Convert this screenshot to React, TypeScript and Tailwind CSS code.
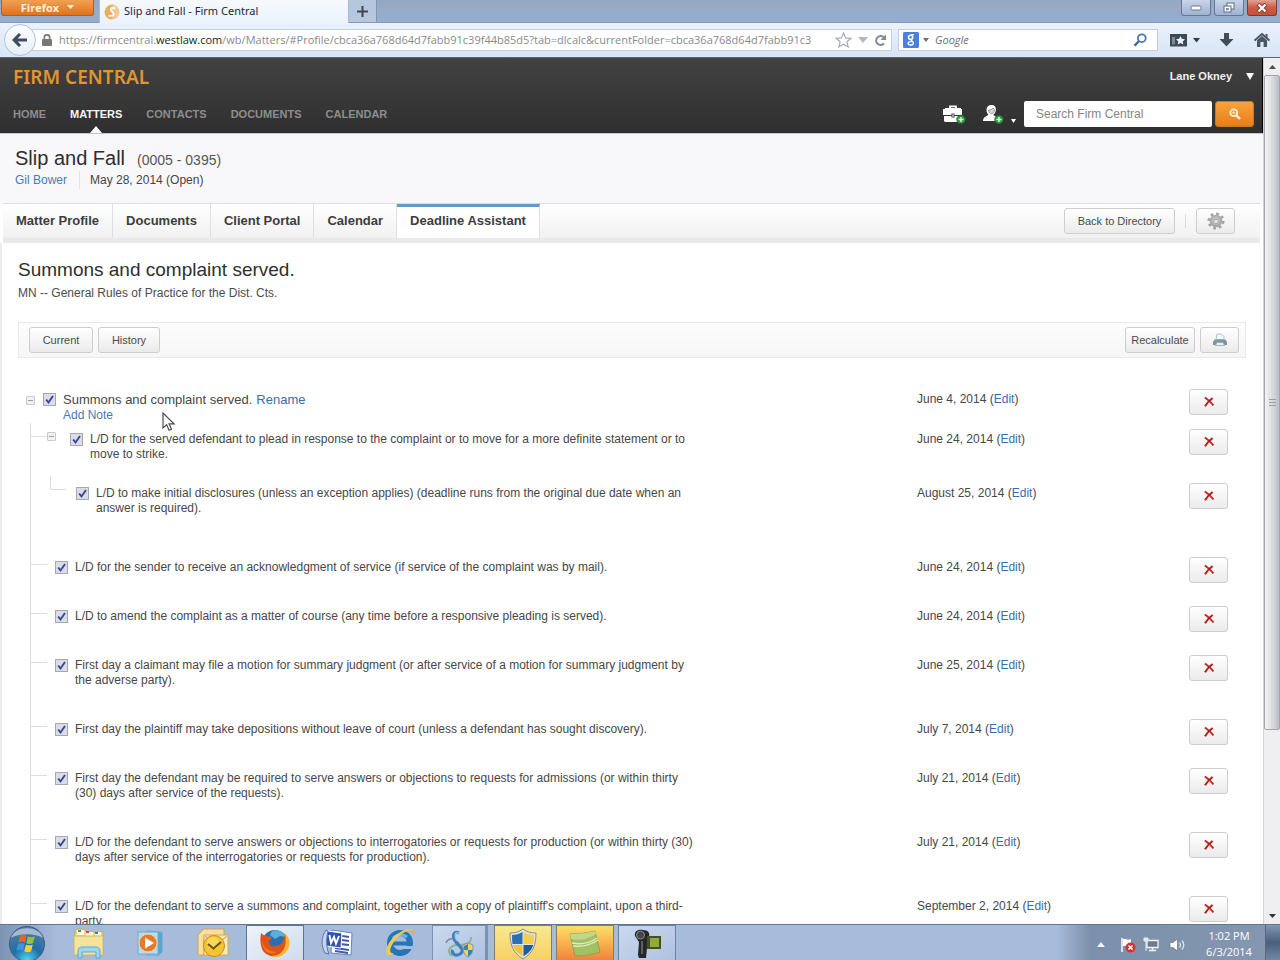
import { useId, useState } from "react";
import type { ReactNode } from "react";

type Deadline = {
  text: string;
  date: string;
  children?: Deadline[];
};

const deadlines: Deadline[] = [
  {
    text: "L/D for the served defendant to plead in response to the complaint or to move for a more definite statement or to move to strike.",
    date: "June 24, 2014",
    children: [
      {
        text: "L/D to make initial disclosures (unless an exception applies) (deadline runs from the original due date when an answer is required).",
        date: "August 25, 2014",
      },
    ],
  },
  { text: "L/D for the sender to receive an acknowledgment of service (if service of the complaint was by mail).", date: "June 24, 2014" },
  { text: "L/D to amend the complaint as a matter of course (any time before a responsive pleading is served).", date: "June 24, 2014" },
  { text: "First day a claimant may file a motion for summary judgment (or after service of a motion for summary judgment by the adverse party).", date: "June 25, 2014" },
  { text: "First day the plaintiff may take depositions without leave of court (unless a defendant has sought discovery).", date: "July 7, 2014" },
  { text: "First day the defendant may be required to serve answers or objections to requests for admissions (or within thirty (30) days after service of the requests).", date: "July 21, 2014" },
  { text: "L/D for the defendant to serve answers or objections to interrogatories or requests for production (or within thirty (30) days after service of the interrogatories or requests for production).", date: "July 21, 2014" },
  { text: "L/D for the defendant to serve a summons and complaint, together with a copy of plaintiff's complaint, upon a third-party.", date: "September 2, 2014" },
];

const buttonLook =
  "flex items-center justify-center rounded-[3px] border border-[#cdcdcd] bg-linear-to-b from-white to-[#ebebeb] text-[11px] text-[#4a4a4a]";

/* ---------- Browser frame ---------- */

function TitleBar() {
  return (
    <div className="flex h-[23px] shrink-0 items-start border-b border-[#8497b3] bg-linear-to-b from-[#93a7c3] via-[#98abc8] to-[#93add2]">
      <button className="ml-px flex h-4 w-[93px] shrink-0 items-center justify-center gap-2 rounded-b-[3px] border border-t-0 border-[#a8622a] bg-linear-to-b from-[#f0a050] to-[#e07218] font-['Open_Sans',sans-serif] text-[11px] leading-[15px] font-bold text-[#fdf0dc]">
        Firefox
        <svg width="7" height="5" aria-hidden="true"><path d="M0 0h7L3.500 4z" fill="#fdf0dc" /></svg>
      </button>
      <div className="ml-[5px] flex h-[23px] w-[250px] shrink-0 items-center gap-1 border-x border-[#a9bad2] bg-linear-to-b from-[#f6f9fd] to-[#eaf3fd] pl-1 font-['Noto_Sans',sans-serif] text-[11px] text-[#222831]">
        <svg width="16" height="16" viewBox="0 0 16 16" aria-hidden="true">
          <circle cx="8" cy="8" r="7.500" fill="#f3c793" />
          <path d="M1 10a7.500 7.500 0 0 1 9-9C7 2 5 4 7 6.500S11 11 7 15.500A7.500 7.500 0 0 1 1 10z" fill="#eda04c" opacity=".75" />
          <path d="M11.500 4.500C8 3 5 5 8 7.600s2 5-3.500 4" fill="none" stroke="#fff" strokeWidth="1.800" />
        </svg>
        Slip and Fall - Firm Central
      </div>
      <button aria-label="New tab" className="flex h-[22px] w-7 shrink-0 items-center justify-center border-r border-[#8194b2] bg-[#b6c6dd]">
        <svg width="11" height="11" aria-hidden="true"><path d="M5.500 0v11M0 5.500h11" stroke="#3c4654" strokeWidth="2" /></svg>
      </button>
      <div className="ml-auto flex gap-[3px] pr-[3px]">
        <button aria-label="Minimize" className="flex h-4 w-[30px] items-center justify-center rounded-b-[3px] border border-t-0 border-[#647894] bg-linear-to-b from-[#c8d5e8] to-[#9db3d3]">
          <svg width="12" height="6" aria-hidden="true"><rect x="1" y="1" width="10" height="4" rx="1" fill="#fff" stroke="#68778d" /></svg>
        </button>
        <button aria-label="Restore" className="flex h-4 w-[30px] items-center justify-center rounded-b-[3px] border border-t-0 border-[#647894] bg-linear-to-b from-[#c8d5e8] to-[#9db3d3]">
          <svg width="14" height="12" aria-hidden="true">
            <rect x="5" y="1" width="7" height="6" fill="#fff" stroke="#5a6a82" />
            <rect x="2" y="4" width="7" height="6" fill="#fff" stroke="#5a6a82" />
            <rect x="4.500" y="6.500" width="2" height="1.500" fill="#9db3d3" stroke="#5a6a82" strokeWidth=".6" />
          </svg>
        </button>
        <button aria-label="Close" className="flex h-4 w-[30px] items-center justify-center rounded-b-[3px] border border-t-0 border-[#7c3a34] bg-linear-to-b from-[#e0a193] via-[#cf5b45] to-[#c4503a]">
          <svg width="12" height="10" aria-hidden="true">
            <path d="M2 1l8 8M10 1L2 9" stroke="#7b3a35" strokeWidth="4" />
            <path d="M2.500 1.500l7 7M9.500 1.500l-7 7" stroke="#fff" strokeWidth="2.300" />
          </svg>
        </button>
      </div>
    </div>
  );
}

function Toolbar() {
  return (
    <div className="flex h-[35px] shrink-0 items-center border-b border-[#5d6670] bg-linear-to-b from-[#eaf3fd] to-[#d8e4f5]">
      <button aria-label="Back" className="relative z-10 ml-1 flex size-8 shrink-0 items-center justify-center rounded-full border border-[#b3c2d6] bg-linear-to-b from-[#fbfdff] to-[#e8eff8]">
        <svg width="16" height="14" viewBox="0 0 16 14" aria-hidden="true"><path d="M8 1L2 7l6 6M2.500 7H15" fill="none" stroke="#3f4c5e" strokeWidth="3" /></svg>
      </button>
      <div className="-ml-1 flex h-[22px] min-w-0 flex-1 items-center border border-[#c3d0e0] bg-white pr-1 pl-[9px] font-['Open_Sans',sans-serif] text-[11px]">
        <svg width="10" height="12" viewBox="0 0 10 12" className="shrink-0" aria-hidden="true">
          <path d="M2.300 6V3.500a2.700 2.700 0 0 1 5.400 0V6" fill="none" stroke="#7e7e7e" strokeWidth="1.700" />
          <rect y="5" width="10" height="7" rx="1" fill="#777" />
        </svg>
        <div role="textbox" aria-label="Address" className="ml-[7px] min-w-0 flex-1 overflow-hidden whitespace-nowrap text-[#8a8a8a]">
          https://firmcentral.<span className="text-[#1c1c1c]">westlaw.com</span>/wb/Matters/#Profile/cbca36a768d64d7fabb91c39f44b85d5?tab=dlcalc&amp;currentFolder=cbca36a768d64d7fabb91c3
        </div>
        <button aria-label="Bookmark" className="ml-[5px]">
          <svg width="17" height="16" viewBox="0 0 17 16" aria-hidden="true"><path d="M8.500 1l2.100 4.900 5.400.4-4.100 3.500 1.300 5.200-4.700-2.800L3.800 15l1.300-5.200L1 6.300l5.400-.4z" fill="#fff" stroke="#a5abb3" strokeWidth="1.200" /></svg>
        </button>
        <button aria-label="Address history" className="ml-1.5">
          <svg width="10" height="8" aria-hidden="true"><path d="M0 1h10L5 7z" fill="#b1b8c4" /></svg>
        </button>
        <button aria-label="Reload" className="ml-1.5">
          <svg width="13" height="13" viewBox="0 0 13 13" aria-hidden="true">
            <path d="M10 9.500A4.500 4.500 0 1 1 9.800 3.300" fill="none" stroke="#7d8797" strokeWidth="1.900" />
            <path d="M12 .5v5.600H6.500z" fill="#7d8797" />
          </svg>
        </button>
      </div>
      <div className="ml-1.5 flex h-[22px] w-[260px] shrink-0 items-center border border-[#c3d0e0] bg-white pr-1 pl-1">
        <button aria-label="Search engine" className="flex items-center gap-1">
          <svg width="16" height="16" viewBox="0 0 16 16" aria-hidden="true">
            <rect width="16" height="16" rx="1.500" fill="#4a7fe0" />
            <circle cx="7.600" cy="5.300" r="2.100" fill="none" stroke="#fff" strokeWidth="1.600" />
            <path d="M11 2.600H8M8.600 7.600c-1.400 1.100 1.800 1.600 1.800 3.600 0 2.400-5.300 2.300-5.300.2 0-1.500 2-1.900 3.500-1.800" fill="none" stroke="#fff" strokeWidth="1.400" />
          </svg>
          <svg width="6" height="4" aria-hidden="true"><path d="M0 0h6L3 4z" fill="#6c6c6c" /></svg>
        </button>
        <input aria-label="Google search" placeholder="Google" className="ml-1.5 min-w-0 flex-1 bg-transparent font-['Open_Sans',sans-serif] text-[11px] italic outline-none placeholder:text-[#6f6f6f]" />
        <button aria-label="Go" className="mr-1.5">
          <svg width="14" height="14" viewBox="0 0 14 14" aria-hidden="true">
            <circle cx="8.800" cy="5.200" r="3.900" fill="#fff" stroke="#4a77ab" strokeWidth="1.800" />
            <path d="M6 8l-4.500 4.800" stroke="#3c689c" strokeWidth="2.400" />
          </svg>
        </button>
      </div>
      <div className="flex shrink-0 items-center pr-2.5 pl-3">
        <button aria-label="Bookmarks" className="flex items-center gap-1.5">
          <svg width="17" height="14" viewBox="0 0 17 14" aria-hidden="true">
            <path d="M0 1h17v12.500H0z" fill="#3d4855" />
            <path d="M2 4h3v7.500H2z" fill="#7f8a96" />
            <path d="M10.500 3l1.300 2.800 3.200.4-2.300 2.200.6 3.200-2.800-1.600-2.800 1.600.6-3.200L6 6.200l3.200-.4z" fill="#eef3f9" />
          </svg>
          <svg width="7" height="5" aria-hidden="true"><path d="M0 0h7L3.500 4.500z" fill="#333d4a" /></svg>
        </button>
        <button aria-label="Downloads" className="ml-[19px]">
          <svg width="15" height="14" viewBox="0 0 15 14" aria-hidden="true"><path d="M5 0h5v6h4.500l-7 7.500-7-7.500H5z" fill="#434d5a" /></svg>
        </button>
        <button aria-label="Home page" className="ml-5">
          <svg width="16" height="14" viewBox="0 0 16 14" aria-hidden="true">
            <path d="M.6 7.600L8 1l7.400 6.600" fill="none" stroke="#4b5664" strokeWidth="2" />
            <path d="M11.500 1h2v4l-2-1.800zM3 7.300l5-4.400 5 4.400V14H9.600V9H6.400v5H3z" fill="#4b5664" />
          </svg>
        </button>
      </div>
    </div>
  );
}

function Scrollbar() {
  return (
    <div aria-hidden="true" className="flex w-[17px] shrink-0 flex-col border-l border-[#d4d4d8] bg-[#efeff1]">
      <div className="flex h-[17px] items-center justify-center">
        <svg width="7" height="4"><path d="M3.500 0L7 4H0z" fill="#4d4d4d" /></svg>
      </div>
      <div className="flex grow-[655] basis-0 items-center justify-center rounded-[2px] border border-[#a4a4ac] bg-linear-to-r from-[#f3f3f4] via-[#dcdce0] to-[#bdbdc6]">
        <svg width="7" height="8"><path d="M0 .5h7M0 3.500h7M0 6.500h7" stroke="#9b9ba1" /></svg>
      </div>
      <div className="grow-[177] basis-0" />
      <div className="flex h-[17px] items-center justify-center">
        <svg width="7" height="4"><path d="M0 0h7L3.500 4z" fill="#333" /></svg>
      </div>
    </div>
  );
}

/* ---------- Firm Central header ---------- */

function PlusBadge() {
  return (
    <g>
      <circle cx="18" cy="15.500" r="4.300" fill="#2f9a45" stroke="#1d5c2a" strokeWidth=".7" />
      <path d="M18 13v5M15.500 15.500h5" stroke="#d8f5d8" strokeWidth="1.500" />
    </g>
  );
}

function SiteHeader() {
  const nav = ["HOME", "MATTERS", "CONTACTS", "DOCUMENTS", "CALENDAR"];
  return (
    <header className="flex h-[75px] shrink-0 justify-between border-r border-black bg-linear-to-b from-[#424242] to-[#2f2f2f] pr-2 pl-[13px]">
      <div className="flex flex-col justify-between">
        <a href="#home" className="pt-1.5 font-['Noto_Sans',sans-serif] text-[19px] leading-[27px] font-semibold text-[#e0952f]">FIRM CENTRAL</a>
        <nav className="flex gap-6">
          {nav.map((item) => (
            <a
              key={item}
              href={"#" + item.toLowerCase()}
              className={
                item === "MATTERS"
                  ? "relative h-[27px] text-[11px] leading-4 font-bold text-[#f4f4f4]"
                  : "h-[27px] text-[11px] leading-4 font-bold text-[#8d8d8d]"
              }
            >
              {item}
              {item === "MATTERS" && (
                <svg width="12" height="7" className="absolute bottom-0 left-1/2 -translate-x-1/2" aria-hidden="true"><path d="M6 0l6 7H0z" fill="#fafafc" /></svg>
              )}
            </a>
          ))}
        </nav>
      </div>
      <div className="flex flex-col items-end justify-between pt-2.5 pb-[6px]">
        <button className="flex items-center gap-3.5 text-[11px] leading-4 font-bold text-[#f0f0f0]">
          Lane Okney
          <svg width="8" height="7" aria-hidden="true"><path d="M0 0h8L4 7z" fill="#fff" /></svg>
        </button>
        <div className="flex items-center">
          <button aria-label="Add matter">
            <svg width="24" height="21" viewBox="0 0 24 21" aria-hidden="true">
              <path d="M7 4.500V2.300h6v2.200" fill="none" stroke="#fff" strokeWidth="1.800" />
              <path d="M2 4h16v1h1v6h-7.500V9.500h-3V11H0V5h2zM1 12h7.500v1.500h3V12H18v6H2l-1-1z" fill="#fff" />
              <path d="M10 10v3" stroke="#bbb" strokeWidth="1.500" />
              <PlusBadge />
            </svg>
          </button>
          <button aria-label="Add contact" className="ml-3.5 flex items-end gap-1.5">
            <svg width="24" height="21" viewBox="0 0 24 21" aria-hidden="true">
              <path d="M10.500 1c3 0 4.600 2 4.400 4.800-.2 2.400-1.200 4.200-2.600 5 .3 1 5 2 5.200 6.200H2c0-4.500 4.800-5 5.400-6.500C6 9.300 5.500 7.800 5.500 5.600 5.500 2.800 7.500 1 10.500 1z" fill="#fff" />
              <path d="M7.500 6c2 0 4-.8 4.800-2 .3 1 .8 1.500 1.300 1.700-.2 2.500-1.400 4-3.100 4S7.600 8.300 7.500 6z" fill="#d5d5d5" stroke="#555" strokeWidth=".5" />
              <PlusBadge />
            </svg>
            <svg width="5" height="7" aria-hidden="true"><path d="M0 1h5L2.500 5z" fill="#fff" /></svg>
          </button>
          <input aria-label="Search Firm Central" placeholder="Search Firm Central" className="ml-2 h-[26px] w-[188px] rounded-[2px] bg-white px-3 text-[12px] text-[#333] outline-none placeholder:text-[#858585]" />
          <button aria-label="Search" className="ml-[3px] flex h-[26px] w-[39px] items-center justify-center rounded-[3px] border border-[#c97a1b] bg-linear-to-b from-[#f9a23a] to-[#e57f18]">
            <svg width="12" height="12" viewBox="0 0 12 12" aria-hidden="true">
              <circle cx="4.800" cy="4.800" r="3.400" fill="none" stroke="#fff3e0" strokeWidth="1.800" />
              <path d="M4.800 3.300v3M3.300 4.800h3" stroke="#fff3e0" />
              <path d="M7.500 7.500L11 11" stroke="#fff3e0" strokeWidth="2.400" />
            </svg>
          </button>
        </div>
      </div>
    </header>
  );
}

function MatterHeader() {
  return (
    <div className="h-[70px] border-t border-[#c8c8cc] bg-[#f8f8fa] pt-3 pl-[15px]">
      <div className="flex items-baseline gap-3">
        <h1 className="text-[20px] leading-6 text-[#2e2e2e]">Slip and Fall</h1>
        <span className="text-[14px] text-[#555]">(0005 - 0395)</span>
      </div>
      <div className="flex text-[12px] leading-[18px] text-[#454545]">
        <a href="#client" className="border-r border-[#e2e4e8] pr-3 text-[#4a7ab5]">Gil Bower</a>
        <span className="pl-2.5">May 28, 2014 (Open)</span>
      </div>
    </div>
  );
}

function TabBar() {
  const tabs = ["Matter Profile", "Documents", "Client Portal", "Calendar"];
  return (
    <div className="mr-[3px] ml-[3px] flex h-10 items-stretch justify-between border-t border-b-5 border-t-[#dcdcde] border-b-[#e9e9ea] bg-linear-to-b from-white to-[#f1f1f1]">
      <nav className="flex text-[13px] leading-[34px] font-bold text-[#3d3d3d]">
        {tabs.map((tab) => (
          <a key={tab} href={"#" + tab} className="border-r border-[#dfdfdf] px-[13px]">{tab}</a>
        ))}
        <a href="#deadlines" aria-current="page" className="border-t-3 border-r border-t-[#6a98c4] border-r-[#dfdfdf] bg-white px-[13px] leading-7">Deadline Assistant</a>
      </nav>
      <div className="flex items-center pr-[25px]">
        <button className={"h-[26px] w-[111px] " + buttonLook}>Back to Directory</button>
        <span className="mx-2.5 h-3.5 w-px bg-[#dcdcdc]" />
        <button aria-label="Settings" className={"h-[26px] w-[39px] " + buttonLook}>
          <svg width="20" height="18" viewBox="0 0 20 20" aria-hidden="true">
            <circle cx="10" cy="10" r="8" fill="none" stroke="#a2a2a2" strokeWidth="3" strokeDasharray="3 3.280" />
            <circle cx="10" cy="10" r="7" fill="#a9a9a9" />
            <circle cx="10" cy="9.500" r="4.800" fill="#bdbdbd" />
            <circle cx="10" cy="10.500" r="2.600" fill="#e4e4e4" stroke="#a0a0a0" />
          </svg>
        </button>
      </div>
    </div>
  );
}

/* ---------- Deadline tree ---------- */

function CheckItem({ text, className, children }: { text?: string; className?: string; children?: ReactNode }) {
  const id = useId();
  const [checked, setChecked] = useState(true);
  return (
    <div className={"flex min-w-0 flex-1 items-start gap-[7px] pr-[217px] " + (className ?? "")}>
      <span className="relative mt-px size-[13px] shrink-0">
        <input
          id={id}
          type="checkbox"
          checked={checked}
          onChange={() => setChecked(!checked)}
          className="peer block size-[13px] appearance-none border border-[#a4a6b0] bg-[#dcdce6]"
        />
        <svg width="13" height="13" className="pointer-events-none invisible absolute inset-0 peer-checked:visible" aria-hidden="true">
          <path d="M3.200 6.500l2.300 3L10 3" fill="none" stroke="#36449a" strokeWidth="1.900" />
        </svg>
      </span>
      {text ? (
        <label htmlFor={id}>{text}</label>
      ) : (
        <div>
          <label htmlFor={id} className="text-[13px]">Summons and complaint served.</label>
          {children}
        </div>
      )}
    </div>
  );
}

function DateAndDelete({ date }: { date: string }) {
  return (
    <div className="flex w-[311px] shrink-0 items-start justify-between">
      <span>
        {date} (<a href="#edit" className="text-[#3b6da8]">Edit</a>)
      </span>
      <button aria-label="Delete deadline" className={"-mt-[3px] -mb-4 h-[26px] w-[39px] " + buttonLook}>
        <svg width="10" height="10" viewBox="0 0 10 10" aria-hidden="true">
          <path d="M.8.500C4 2.500 7.500 6 9.500 8.500" fill="none" stroke="#c22a22" strokeWidth="1.900" />
          <path d="M8.600 1C6 3 3 6 1 9.300" fill="none" stroke="#b81d17" strokeWidth="2.100" />
        </svg>
      </button>
    </div>
  );
}

function Collapse() {
  return (
    <button aria-label="Collapse" className="flex size-[9px] shrink-0 items-center justify-center rounded-[1px] border border-[#cacaca] bg-[#f1f1f1]">
      <span className="h-px w-[5px] bg-[#9d9d9d]" />
    </button>
  );
}

function DeadlineNode({ item }: { item: Deadline }) {
  return (
    <li className="mb-[34px]">
      <div className="flex items-start">
        <span className="mt-1 h-px w-4 shrink-0 bg-[#dedede]" />
        {item.children && (
          <span className="mr-[6px] flex"><Collapse /></span>
        )}
        <CheckItem text={item.text} className="pl-2" />
        <DateAndDelete date={item.date} />
      </div>
      {item.children && (
        <ul className="mt-6 -mb-6 pb-[34px] pl-[19px]">
          {item.children.map((child) => (
            <li key={child.text} className="flex items-start">
              <span className="-mt-2.5 h-[14px] w-4 shrink-0 border-b border-l border-[#dedede]" />
              <CheckItem text={child.text} className="pl-2.5" />
              <DateAndDelete date={child.date} />
            </li>
          ))}
        </ul>
      )}
    </li>
  );
}

function DeadlineTree() {
  return (
    <div className="relative mt-[34px] pr-[35px] text-[12px] leading-[15px] text-[#474747]">
      <div className="flex items-start pl-2">
        <span className="mt-1 mr-2 flex"><Collapse /></span>
        <CheckItem>
          <a href="#rename" className="ml-1 text-[13px] text-[#3b6da8]">Rename</a>
          <a href="#note" className="block text-[#4a7ab5]">Add Note</a>
        </CheckItem>
        <DateAndDelete date="June 4, 2014" />
      </div>
      <ul className="ml-3 border-l border-[#dedede] pt-[9px]">
        {deadlines.map((item) => (
          <DeadlineNode key={item.text} item={item} />
        ))}
      </ul>
      <svg width="14" height="20" viewBox="0 0 14 20" className="absolute top-5 left-36" aria-hidden="true">
        <path d="M1 1v15l3.600-3.300 2.500 5.600 2.400-1-2.400-5.500h5z" fill="#fff" stroke="#4c4c4c" strokeWidth="1.200" />
      </svg>
    </div>
  );
}

function DeadlinePanel() {
  return (
    <main className="border-l-2 border-[#ececec] bg-white pt-[17px] pl-4">
      <h2 className="text-[19px] leading-5 text-[#2f2f2f]">Summons and complaint served.</h2>
      <p className="mt-1 text-[12px] leading-[18px] text-[#4c4c4c]">MN -- General Rules of Practice for the Dist. Cts.</p>
      <div className="mt-5 mr-[17px] flex h-9 items-center justify-between border border-[#e9e9e9] bg-linear-to-b from-[#fdfdfd] to-[#f6f6f6] pr-1.5 pl-2.5">
        <div className="flex gap-[5px]">
          <button className={"h-[26px] w-16 " + buttonLook}>Current</button>
          <button className={"h-[26px] w-[62px] " + buttonLook}>History</button>
        </div>
        <div className="flex gap-[5px]">
          <button className={"h-[26px] w-[70px] " + buttonLook}>Recalculate</button>
          <button aria-label="Print" className={"h-[26px] w-[39px] " + buttonLook}>
            <svg width="16" height="14" viewBox="0 0 16 14" aria-hidden="true">
              <path d="M4 6.500L5 1h4.500L12 3.500v3z" fill="#eef8fb" stroke="#9fc0cc" strokeWidth=".9" />
              <path d="M2.500 6.500h11L15 9v3h-3l-1-2H5l-1 2H1V9z" fill="#84939b" />
              <path d="M5 9.500h6l1.500 3h-9z" fill="#dff1f7" stroke="#8fa7b2" strokeWidth=".8" />
            </svg>
          </button>
        </div>
      </div>
      <DeadlineTree />
    </main>
  );
}

/* ---------- Windows taskbar ---------- */

const slotLooks = {
  plain: "flex h-9 w-[62px] items-center justify-center",
  active: "mx-0.5 flex h-9 w-[58px] items-center justify-center border border-b-0 border-[#5f7391] bg-linear-to-br from-[#eef3fa] to-[#cfdbed]",
  open: "mx-0.5 flex h-9 w-[58px] items-center justify-center border border-b-0 border-[#6c80a0] bg-linear-to-br from-[#cbd9ee] to-[#adc1e0]",
  stacked: "mr-1 ml-0.5 flex h-9 w-[56px] items-center justify-center border border-r-3 border-b-0 border-[#7d91b0] bg-linear-to-br from-[#cbd9ee] to-[#adc1e0]",
  yellow: "mx-0.5 flex h-9 w-[58px] items-center justify-center border border-b-0 border-[#8a7d55] bg-linear-to-b from-[#f7e98d] to-[#f8cf62]",
  orange: "mx-0.5 flex h-9 w-[58px] items-center justify-center border border-b-0 border-[#8a7d55] bg-linear-to-b from-[#fae065] to-[#f0803a]",
};

function Slot({ label, look, children }: { label: string; look: keyof typeof slotLooks; children: ReactNode }) {
  return (
    <button aria-label={label} className={slotLooks[look]}>
      <svg width="34" height="32" viewBox="0 0 34 32" aria-hidden="true">{children}</svg>
    </button>
  );
}

function Taskbar() {
  return (
    <footer className="flex h-9 shrink-0 justify-between border-t border-[#64768f] bg-[#a7bbdb]">
      <div className="flex items-start">
        <button aria-label="Start" className="flex h-9 w-[58px] justify-center bg-linear-to-r from-[#7d93b3] to-[#a7bbdb] pr-1">
          <svg width="38" height="36" viewBox="0 0 38 36" aria-hidden="true">
            <defs>
              <radialGradient id="orb" cx=".5" cy=".95" r=".9">
                <stop offset="0" stopColor="#4fd6f2" />
                <stop offset=".45" stopColor="#1d6fa8" />
                <stop offset="1" stopColor="#5b7ca0" />
              </radialGradient>
            </defs>
            <circle cx="19" cy="19" r="17.500" fill="url(#orb)" stroke="#3d5a80" />
            <path d="M3 13C7 0 31 0 35 13 27 8 11 8 3 13z" fill="#c6d6e6" opacity=".7" />
            <path d="M12 11c2-1.500 4-1.500 6.500-.2L17 17.500c-2.500-1.200-4.500-1-6.800.2z" fill="#e8632a" />
            <path d="M19.800 11.300c2.500 1.300 4.700 1.300 7-.1l-1.700 6.900c-2.300 1.300-4.500 1.200-6.800.1z" fill="#8fc43f" />
            <path d="M9.900 19c2.200-1.300 4.400-1.400 6.800-.2l-1.600 6.800c-2.400-1.200-4.500-1.200-6.800.1z" fill="#3f94dd" />
            <path d="M18 19.500c2.300 1.100 4.500 1.200 6.800 0l-1.700 6.700c-2.300 1.400-4.500 1.300-6.800.1z" fill="#f8cf3b" />
          </svg>
        </button>
        <Slot label="Explorer" look="plain">
          <path d="M3 4l2-2h8l1 3h17v23H2z" fill="#efd884" stroke="#c9a955" />
          <path d="M5 3h7v5H5zM14 5h7v4h-7zM23 5h6v4h-6z" fill="#fff8dc" />
          <path d="M6 3h3v2H6z" fill="#43a35a" /><path d="M14 4h3v2h-3z" fill="#d1503c" /><path d="M23 5h3v2h-3z" fill="#3d7fc0" />
          <path d="M2 9h29v19H2z" fill="#f5e39c" stroke="#d3b75e" />
          <path d="M6 31v-7c0-3 2-4 4-4h14c2 0 4 1 4 4v7h-4v-6H10v6z" fill="#9ed6ef" stroke="#5ba9cf" />
        </Slot>
        <Slot label="Media player" look="plain">
          <path d="M13 4l15 1v20l-3 3H12z" fill="#8ec7e5" stroke="#6baad0" />
          <path d="M24 5l4 1v19l-4 3z" fill="#5da5cf" />
          <path d="M4 5h20v22H4z" fill="#b4dcf0" stroke="#6baad0" />
          <circle cx="14" cy="16" r="9" fill="#e57a2c" stroke="#fbd3a5" />
          <path d="M11 10.500L20 16l-9 5.500z" fill="#fff" />
        </Slot>
        <Slot label="Outlook" look="plain">
          <path d="M2 8L8 2h20v9H8v17H2z" fill="#f6dfa2" stroke="#d8a448" />
          <path d="M8 8h24v20H8z" fill="#fbedbf" stroke="#dda542" />
          <path d="M9 9l11 9L31 9" fill="none" stroke="#e3b456" strokeWidth="1.500" />
          <circle cx="18" cy="19" r="10.500" fill="#f4c531" stroke="#c98d1b" />
          <circle cx="17" cy="16" r="6" fill="#fbe27c" opacity=".6" />
          <path d="M12 17l5.500 4.500L25 15" fill="none" stroke="#6b5212" strokeWidth="2" />
        </Slot>
        <Slot label="Firefox" look="active">
          <circle cx="17" cy="15" r="13" fill="#2b6fb0" />
          <path d="M14 3c6-2 12 1 14 6l-6-1-5 3-5-4z" fill="#58b0da" />
          <path d="M3 5c2 1 3 3 5 3l6 1c-1 3-4 3-3 6 2 5 8 4 12 1 2-2 4-5 3-9 6 5 6 11 2 16-6 8-20 7-24-2C2 16 2 10 3 5z" fill="#de5418" />
          <path d="M27 5c6 6 6 14 1 19-4 5-10 6-15 4 8 0 13-5 14-10 1-4 1-8 0-13z" fill="#f7b532" />
          <path d="M4 12c1 8 7 12 15 12-4 2-9 2-12-2-2-3-3-6-3-10z" fill="#ef7a22" />
        </Slot>
        <Slot label="Word" look="plain">
          <path d="M12 3l20 3-1 22-20-2z" fill="#fff" stroke="#6b83b5" />
          <path d="M22 9l7 1M22 13l7 1M20 17l9 1M15 21l14 2M15 24l13 2" stroke="#3e5ca5" strokeWidth="1.800" />
          <path d="M7 4l15 2-1 15L6 19z" fill="#3155a6" stroke="#fff" />
          <path d="M9.500 8l1.500 8 3-6 2 6.500 3-7.500" fill="none" stroke="#fff" strokeWidth="2" />
          <path d="M6 3c-5 7-5 16-1 23l4 1C6 20 6 12 8 4z" fill="#c7d4ee" stroke="#5874b3" />
        </Slot>
        <Slot label="Internet Explorer" look="plain">
          <circle cx="18" cy="16" r="10" fill="none" stroke="#2775b9" strokeWidth="6" />
          <path d="M11 12c2-4 9-6 14-2" fill="none" stroke="#63b8e6" strokeWidth="3" />
          <path d="M10 16.500h18" stroke="#2775b9" strokeWidth="4" />
          <path d="M20 19h12v3H20z" fill="#a7bbdb" />
          <path d="M32 3C26-1 10 7 5 20c-3 9 2 10 7 6-3 1-5-1-3-6C13 10 24 2 32 3z" fill="#eecb4e" />
          <path d="M32 3c1 2 0 4-1 6 0-3-1-5-3-6z" fill="#dfb537" />
        </Slot>
        <Slot label="Network setup" look="stacked">
          <path d="M10 28c-7-5-1-11 6-11s14-2 13-8" fill="none" stroke="#83b68a" strokeWidth="1.800" />
          <path d="M4 15c3-6 9-5 12 0s7 9 10 3" fill="none" stroke="#7b8696" strokeWidth="1.500" />
          <path d="M17 5c-6-3-7 4-3 9 3 4 10 8 4 12-5 3-9-1-7-4" fill="none" stroke="#3f7fc0" strokeWidth="3.200" />
          <path d="M17 5c-5-2-5 4-2 8" fill="none" stroke="#a1c9ed" strokeWidth="1.200" />
          <path d="M21 17l5-2 5 2c0 7-1 10-5 12-4-2-5-5-5-12z" fill="#eed45c" stroke="#8a94a0" />
          <path d="M26 16v6h-4.500L22 18zM26 22h4.500c-.5 3-1.500 5-4.500 6.500z" fill="#3a7fc1" />
        </Slot>
        <Slot label="Security prompt" look="yellow">
          <path d="M17 1c4 3 8 4 13 4 0 12-3 20-13 26C7 25 4 17 4 5c5 0 9-1 13-4z" fill="#dfe3e6" stroke="#8a8f96" />
          <path d="M16.500 4v12H6.500C6 13 6 10 6 7c4 0 7-1 10.500-3z" fill="#2c6fb5" />
          <path d="M17.500 4v12h10c.5-3 .5-6 .5-9-4 0-7-1-10.500-3z" fill="#f6cf49" />
          <path d="M6.800 17h9.700v11.300C11 25 8 21.500 6.800 17z" fill="#f2c23d" />
          <path d="M27.200 17h-9.700v11.300c5.500-3.300 8.500-6.800 9.700-11.300z" fill="#235c9c" />
        </Slot>
        <Slot label="Camtasia" look="orange">
          <path d="M2 6c9 0 17-1 25-3l5 21c-8 3-16 4-25 4z" fill="#a3c063" stroke="#8aa64d" />
          <path d="M3 11c9 2 17 0 25-5l-1-3C19 5 11 6 2 6z" fill="#c2d68c" />
          <path d="M4 15c10 2 18 0 25-5M5 18c10 1 18-1 25-6" fill="none" stroke="#dfe9bd" strokeWidth="1.500" />
        </Slot>
        <Slot label="Recorder" look="open">
          <path d="M5 8c-1-5 3-7 8-6 5 0 7 3 6 6l-2 4v8l-1 10H9l-1-3 1-13z" fill="#25282b" />
          <circle cx="10.500" cy="7" r="4" fill="#43474c" stroke="#85898d" />
          <path d="M12 13v13" stroke="#6b7074" strokeWidth="1.500" />
          <path d="M17 8h14v13H17z" fill="#45511f" />
          <path d="M20 10h9v9h-9z" fill="#93a93b" />
        </Slot>
      </div>
      <div className="flex items-stretch bg-linear-to-r from-[#a7bbdb] via-[#7c90ab] via-15% to-[#8597b0] pl-10 font-['Open_Sans',sans-serif]">
        <div className="flex items-center gap-2.5 pt-1">
          <button aria-label="Show hidden icons"><svg width="8" height="5" aria-hidden="true"><path d="M4 0l4 5H0z" fill="#f1f5fa" /></svg></button>
          <svg width="18" height="16" viewBox="0 0 18 16" className="ml-1" aria-label="Action center">
            <path d="M3 1v14" stroke="#e5eaf0" strokeWidth="1.800" /><path d="M4 2c3-1 4 2 8 0v7c-4 2-5-1-8 0z" fill="#fff" />
            <circle cx="11.500" cy="10.500" r="5" fill="#cf352c" /><path d="M9.500 8.500l4 4M13.500 8.500l-4 4" stroke="#fff" strokeWidth="1.700" />
          </svg>
          <svg width="16" height="15" viewBox="0 0 16 15" className="-ml-1" aria-label="Network">
            <path d="M4 3.500h11v7H4z" fill="#6b7c92" stroke="#f1f4f8" strokeWidth="1.300" /><path d="M9.500 11v2M6 13.500h7" stroke="#f1f4f8" strokeWidth="1.500" />
            <path d="M1 1h4v3H1zM3 4v10" fill="#dbe2ea" stroke="#e9edf2" />
          </svg>
          <svg width="16" height="14" viewBox="0 0 16 14" aria-label="Volume">
            <path d="M1 4.500h3L8.500 1v12L4 9.500H1z" fill="#fff" stroke="#5a6b80" strokeWidth=".6" />
            <path d="M10.500 4.500c1.200 1.500 1.200 3.500 0 5M13 2.500c2.200 2.700 2.200 6.300 0 9" fill="none" stroke="#e5ebf2" strokeWidth="1.200" />
          </svg>
        </div>
        <div className="flex w-[76px] flex-col items-center justify-end pl-3 text-center text-[11px] leading-4 text-white">
          <span>1:02 PM</span>
          <span>6/3/2014</span>
        </div>
        <button aria-label="Show desktop" className="ml-1 w-[15px] border-l border-[#56677f] bg-linear-to-b from-[#8396b0] via-[#4b607c] to-[#7187a3]" />
      </div>
    </footer>
  );
}

export default function App() {
  return (
    <div className="flex h-screen flex-col overflow-hidden bg-white font-['Liberation_Sans',Arial,sans-serif]">
      <TitleBar />
      <Toolbar />
      <div className="flex min-h-0 flex-1">
        <div className="min-w-0 flex-1 overflow-hidden">
          <SiteHeader />
          <MatterHeader />
          <TabBar />
          <DeadlinePanel />
        </div>
        <Scrollbar />
      </div>
      <Taskbar />
    </div>
  );
}
